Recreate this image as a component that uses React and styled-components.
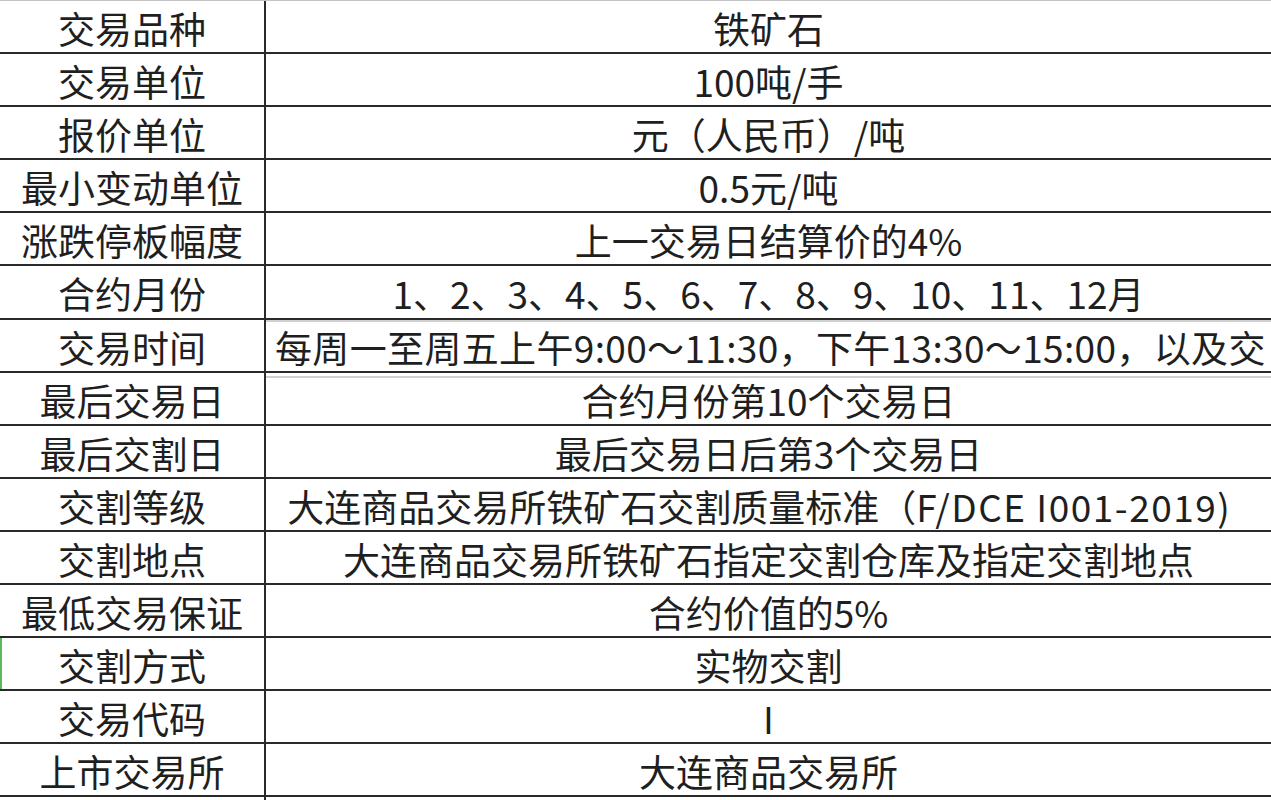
import React from "react";
import styled, { createGlobalStyle } from "styled-components";

const Global = createGlobalStyle`
  html, body { margin: 0; padding: 0; background: #ffffff; }
  body { font-family: "Noto Sans CJK SC", "Noto Sans", sans-serif; }
`;

const Table = styled.div`
  width: 1271px;
  height: 800px;
  overflow: hidden;
  box-sizing: border-box;
  border-top: 1px solid #c4c4c4;
  display: flex;
  flex-direction: column;
  color: #1f1f1f;
  font-size: 37px;
`;

const Row = styled.div`
  display: grid;
  grid-template-columns: 266px 1fr;
  height: 53.1px;
  flex: none;
  box-sizing: border-box;
  border-bottom: 2px solid #2a2a2a;
  box-shadow: ${(p) => (p.$mark ? "inset 2px 0 0 #5cb85c" : "none")};
`;

const Label = styled.div`
  box-sizing: border-box;
  border-right: 2px solid #2a2a2a;
  display: flex;
  align-items: center;
  justify-content: center;
  white-space: nowrap;
  padding-bottom: 4px;
`;

const Value = styled.div`
  display: flex;
  align-items: center;
  justify-content: ${(p) => (p.$overflow ? "flex-start" : "center")};
  padding-left: ${(p) => (p.$overflow ? "9px" : "0")};
  padding-right: ${(p) => (p.$shift ? "20px" : "0")};
  padding-bottom: 4px;
  letter-spacing: ${(p) => (p.$overflow ? "0.35px" : "normal")};
  white-space: nowrap;
  overflow: hidden;
  box-shadow: ${(p) =>
    p.$overflow ? "inset 0 2px 0 #d0d0d0, inset 0 -2px 0 #d0d0d0" : "none"};
`;

const Latin = styled.span`
  letter-spacing: 1.5px;
`;

const rows = [
  { label: "交易品种", value: "铁矿石" },
  { label: "交易单位", value: "100吨/手" },
  { label: "报价单位", value: "元（人民币）/吨" },
  { label: "最小变动单位", value: "0.5元/吨" },
  { label: "涨跌停板幅度", value: "上一交易日结算价的4%" },
  { label: "合约月份", value: "1、2、3、4、5、6、7、8、9、10、11、12月" },
  {
    label: "交易时间",
    value: "每周一至周五上午9:00～11:30，下午13:30～15:00，以及交",
    overflow: true,
  },
  { label: "最后交易日", value: "合约月份第10个交易日" },
  { label: "最后交割日", value: "最后交易日后第3个交易日" },
  {
    label: "交割等级",
    value: (
      <>
        大连商品交易所铁矿石交割质量标准（<Latin>F/DCE I001-2019</Latin>)
      </>
    ),
    shift: true,
  },
  { label: "交割地点", value: "大连商品交易所铁矿石指定交割仓库及指定交割地点" },
  { label: "最低交易保证", value: "合约价值的5%" },
  { label: "交割方式", value: "实物交割", mark: true },
  { label: "交易代码", value: "I" },
  { label: "上市交易所", value: "大连商品交易所" },
];

export default function App() {
  return (
    <>
      <Global />
      <Table>
        {rows.map((r) => (
          <Row key={r.label} $mark={r.mark}>
            <Label>{r.label}</Label>
            <Value $overflow={r.overflow} $shift={r.shift}>
              {r.value}
            </Value>
          </Row>
        ))}
      </Table>
    </>
  );
}
